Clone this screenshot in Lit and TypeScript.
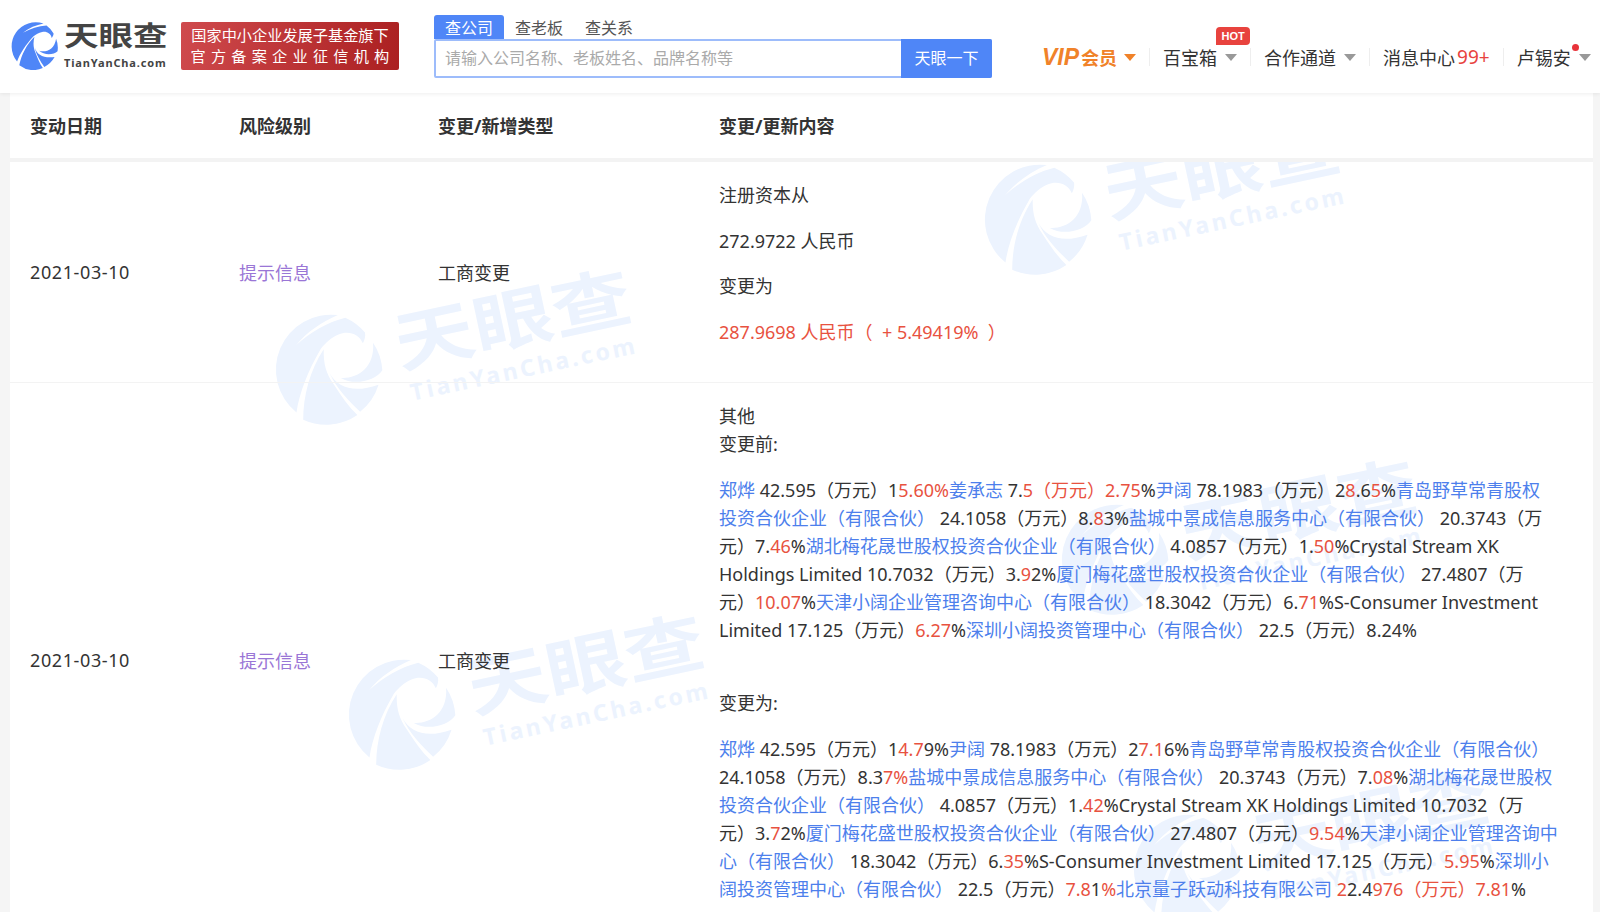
import { LitElement, html, css, svg } from "lit";
import { customElement } from "lit/decorators.js";
import { unsafeHTML } from "lit/directives/unsafe-html.js";

const swirl = svg`
  <path d="M70 285A163 163 0 0 1 250 28C200 38 150 58 110 90C160 60 215 42 270 40A163 163 0 0 1 318 95C318 105 312 118 305 125C300 95 270 78 240 85C215 90 200 100 180 115C130 170 90 230 70 285Z"/>
  <path d="M85 310C100 240 135 170 188 118C178 160 180 190 195 225C210 265 225 300 245 330A163 163 0 0 1 85 310Z"/>
  <path d="M190 190C205 240 250 265 325 255A163 163 0 0 1 255 322C230 285 200 240 190 190Z"/>
  <path d="M220 212C265 225 325 205 335 130A163 163 0 0 1 345 215C320 240 255 245 220 212Z"/>`;

const fmt = (s: string) =>
  s
    .replace(/\(/g, "\uFF08")
    .replace(/\)/g, "\uFF09")
    .replace(/\{/g, '<span class="b">')
    .replace(/\[/g, '<span class="r">')
    .replace(/[}\]]/g, "</span>");

const before = [
  "{郑烨} 42.595(万元)1[5.60%]{姜承志} 7.[5(万元)2.75]%{尹阔} 78.1983(万元)2[8].6[5]%{青岛野草常青股权}",
  "{投资合伙企业(有限合伙)} 24.1058(万元)8.[8]3%{盐城中景成信息服务中心(有限合伙)} 20.3743(万",
  "元)7.[46]%{湖北梅花晟世股权投资合伙企业(有限合伙)} 4.0857(万元)1.[50]%Crystal Stream XK",
  "Holdings Limited 10.7032(万元)3.[9]2%{厦门梅花盛世股权投资合伙企业(有限合伙)} 27.4807(万",
  "元)[10.07]%{天津小阔企业管理咨询中心(有限合伙)} 18.3042(万元)6.[71]%S-Consumer Investment",
  "Limited 17.125(万元)[6.27]%{深圳小阔投资管理中心(有限合伙)} 22.5(万元)8.24%",
];
const after = [
  "{郑烨} 42.595(万元)1[4.7]9%{尹阔} 78.1983(万元)2[7.1]6%{青岛野草常青股权投资合伙企业(有限合伙)}",
  "24.1058(万元)8.3[7%]{盐城中景成信息服务中心(有限合伙)} 20.3743(万元)7.[08]%{湖北梅花晟世股权}",
  "{投资合伙企业(有限合伙)} 4.0857(万元)1.[42]%Crystal Stream XK Holdings Limited 10.7032(万",
  "元)3.[7]2%{厦门梅花盛世股权投资合伙企业(有限合伙)} 27.4807(万元)[9.54]%{天津小阔企业管理咨询中}",
  "{心(有限合伙)} 18.3042(万元)6.[35]%S-Consumer Investment Limited 17.125(万元)[5.95]%{深圳小}",
  "{阔投资管理中心(有限合伙)} 22.5(万元)[7.8]1[%]{北京量子跃动科技有限公司} [2]2.4[976(万元)7.81]%",
];

@customElement("app-root")
export class AppRoot extends LitElement {
  static styles = css`
    :host { display: block; height: 912px; overflow: hidden; background: #f5f5f5; position: relative;
      font-family: "Noto Sans", "Noto Sans CJK SC", sans-serif; color: #333; font-size: 18px; }
    * { box-sizing: border-box; }
    .hdr { height: 93px; background: #fff; display: flex; align-items: flex-start; position: relative; z-index: 5;
      box-shadow: 0 1px 4px rgba(0,0,0,.07); }
    .logo { width: 170px; margin-left: 10px; margin-top: 22px; display: flex; gap: 6px; flex: none; }
    .logo svg { width: 48px; height: 48px; fill: #4f86f7; flex: none; }
    .wm1 { display: flex; flex-direction: column; color: #333; margin-top: -3px; }
    .wm1 b { display: block; font-size: 34.5px; line-height: 34px; height: 34px; font-weight: 700; white-space: nowrap; color: #444; transform: scaleY(.78); }
    .wm1 i { font-style: normal; font-size: 11px; line-height: 13px; font-weight: 700; letter-spacing: .85px; white-space: nowrap; color: #444; margin-top: 3px; }
    .slogan { width: 218px; height: 48px; margin: 22px 0 0 1px; border-radius: 2px; flex: none; color: #fff;
      background: linear-gradient(100deg, #cf4a4d, #ab2021); font-size: 15.2px; line-height: 21px; padding: 3px 0 0; text-align: center; }
    .slogan div { white-space: nowrap; }
    .slogan .sp { letter-spacing: 5.2px; margin-right: -5px; }
    .search { margin: 15px 0 0 35px; width: 558px; flex: none; }
    .tabs { display: flex; height: 24px; font-size: 16px; color: #555; }
    .tabs span { width: 70px; text-align: center; line-height: 26px; white-space: nowrap; }
    .tabs span.on { background: #4f86f7; color: #fff; border-radius: 3px 3px 0 0; }
    .box { height: 39px; border: 2px solid #9dbcfb; border-radius: 2px; display: flex; background: #fff; }
    .box .ph { flex: 1; color: #aaa; font-size: 16px; line-height: 34px; padding-left: 9px; white-space: nowrap; }
    .box .btn { width: 91px; margin: -2px -2px -2px 0; background: #4f86f7; color: #fff; font-size: 16px; line-height: 38px; text-align: center; border-radius: 0 2px 2px 0; white-space: nowrap; }
    .nav { flex: 1; margin-top: 42px; height: 30px; display: flex; align-items: center; font-size: 18px; color: #333; padding-left: 50px; white-space: nowrap; }
    .item { display: flex; align-items: center; position: relative; height: 30px; }
    .sep { width: 1px; height: 18px; background: #eee; flex: none; margin: 0 13px; }
    .tri { width: 0; height: 0; border: 6px solid transparent; border-top: 7px solid #999; border-bottom: 0; margin-left: 8px; }
    .vip { color: #f08229; font-weight: 700; }
    .vip em { font-size: 23px; font-weight: 700; font-style: italic; margin-right: 2px; font-family: "Liberation Sans", sans-serif; }
    .vip .tri { border-top-color: #f08229; margin-left: 7px; }
    .hot { position: absolute; top: -15px; left: 53px; width: 34px; height: 18px; background: #e8433e; color: #fff; font-size: 11px; font-weight: 700;
      line-height: 18px; text-align: center; border-radius: 4px 4px 4px 0; font-family: "Liberation Sans", sans-serif; }
    .dot { position: absolute; top: 2px; left: 55px; width: 7px; height: 7px; border-radius: 50%; background: #e8333a; }
    .red { color: #e8433e; margin-left: 2px; font-size: 19px; }
    .main { position: relative; margin: 0 7px 0 10px; height: 819px; background: #fff; overflow: hidden; }
    .row { display: grid; grid-template-columns: 209px 199px 281px 1fr; position: relative; z-index: 1; }
    .row > div { padding-left: 20px; }
    .th { height: 69px; border-bottom: 4px solid #f3f3f3; background: #fff; z-index: 2; font-weight: 700; line-height: 64px; padding-top: 1px; }
    .tr1 { height: 221px; border-bottom: 1px solid #f3f3f3; align-items: center; }
    .tr2 { align-items: start; height: 553px; }
    .vc { align-self: center; }
    .pur { color: #9a76d6; }
    .c1 { align-self: start; padding-top: 19px; }
    .c1 p { margin: 0 0 17.5px; line-height: 28px; white-space: nowrap; }
    .c1 p:last-child { margin: 0; }
    .cr { color: #e8523f; }
    .c2 { padding-top: 19px; }
    .ln { line-height: 28px; white-space: nowrap; }
    .para { margin: 18px 0 0; }
    .gap { margin-top: 45px; }
    .b { color: #4d7fec; }
    .r { color: #e8523f; }
    .date { letter-spacing: .6px; }
    .wm { position: absolute; z-index: 0; width: 360px; height: 116px; transform: rotate(-12deg); transform-origin: left top; color: #ecf3fe; pointer-events: none; }
    .wm svg { position: absolute; left: -2px; top: -1px; width: 110px; height: 110px; fill: #ecf3fe; }
    .wm b { position: absolute; left: 125px; top: -6px; font-size: 80px; line-height: 96px; font-weight: 700; white-space: nowrap; transform: scaleY(.82); }
    .wm i { position: absolute; left: 130px; top: 78px; font-style: normal; font-size: 23px; line-height: 30px; font-weight: 700; letter-spacing: 3px; white-space: nowrap; }
  `;

  private wm(x: number, y: number) {
    return html`<div class="wm" style="left:${x}px;top:${y}px">
      <svg viewBox="22 17 326 326">${swirl}</svg><b>天眼查</b><i>TianYanCha.com</i>
    </div>`;
  }
  private lines(a: string[]) {
    return a.map((l) => html`<div class="ln">${unsafeHTML(fmt(l))}</div>`);
  }

  render() {
    return html`
      <div class="hdr">
        <div class="logo">
          <svg viewBox="22 17 326 326">${swirl}</svg>
          <div class="wm1"><b>天眼查</b><i>TianYanCha.com</i></div>
        </div>
        <div class="slogan"><div>国家中小企业发展子基金旗下</div><div class="sp">官方备案企业征信机构</div></div>
        <div class="search">
          <div class="tabs"><span class="on">查公司</span><span>查老板</span><span>查关系</span></div>
          <div class="box"><div class="ph">请输入公司名称、老板姓名、品牌名称等</div><div class="btn">天眼一下</div></div>
        </div>
        <div class="nav">
          <div class="item vip"><em>VIP</em>会员<span class="tri"></span></div>
          <div class="sep"></div>
          <div class="item">百宝箱<span class="tri"></span><span class="hot">HOT</span></div>
          <div class="sep"></div>
          <div class="item">合作通道<span class="tri"></span></div>
          <div class="sep"></div>
          <div class="item">消息中心<span class="red">99+</span></div>
          <div class="sep"></div>
          <div class="item">卢锡安<span class="tri"></span><span class="dot"></span></div>
        </div>
      </div>
      <div class="main">
        ${this.wm(254, 235)}
        ${this.wm(963, 85)}
        ${this.wm(327, 580)}
        ${this.wm(1040, 425)}
        ${this.wm(1112, 735)}
        <div class="row th"><div>变动日期</div><div>风险级别</div><div>变更/新增类型</div><div>变更/更新内容</div></div>
        <div class="row tr1">
          <div class="date">2021-03-10</div><div class="pur">提示信息</div><div>工商变更</div>
          <div class="c1"><p>注册资本从</p><p>272.9722 人民币</p><p>变更为</p><p class="cr">${unsafeHTML(fmt("287.9698 人民币(\u00a0 + 5.49419%\u00a0 )"))}</p></div>
        </div>
        <div class="row tr2">
          <div class="vc date">2021-03-10</div><div class="vc pur">提示信息</div><div class="vc">工商变更</div>
          <div class="c2">
            <div class="ln">其他</div><div class="ln">变更前:</div>
            <div class="para">${this.lines(before)}</div>
            <div class="ln gap">变更为:</div>
            <div class="para">${this.lines(after)}</div>
          </div>
        </div>
      </div>
    `;
  }
}
